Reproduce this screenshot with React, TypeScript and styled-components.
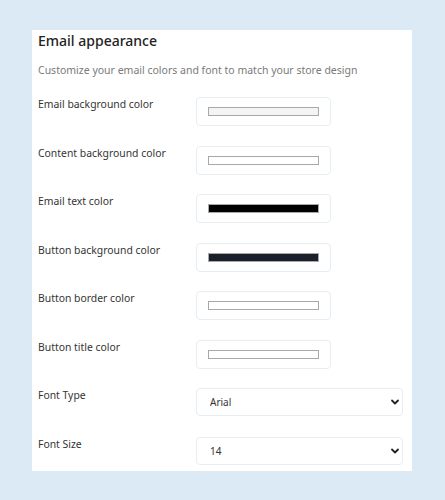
import React, { useState } from 'react'
import styled, { createGlobalStyle } from 'styled-components'

const GlobalStyle = createGlobalStyle`
  html, body {
    margin: 0;
    padding: 0;
    background: #dbeaf4;
  }
  body {
    font-family: "Noto Sans", "Open Sans", sans-serif;
  }
`

const colorFields = [
  { label: 'Email background color', value: '#f4f4f4' },
  { label: 'Content background color', value: '#ffffff' },
  { label: 'Email text color', value: '#000000' },
  { label: 'Button background color', value: '#1a1f2b' },
  { label: 'Button border color', value: '#ffffff' },
  { label: 'Button title color', value: '#ffffff' },
]

const Chevron = () => (
  <svg width="10" height="10" viewBox="0 0 10 10">
    <path d="M2 3.5 L5 6.5 L8 3.5" fill="none" stroke="#222" strokeWidth="1.8" strokeLinecap="round" strokeLinejoin="round" />
  </svg>
)

const App: React.FC = () => {
  const [colors, setColors] = useState(colorFields.map((f) => f.value))
  const [font, setFont] = useState('Arial')
  const [size, setSize] = useState('14')

  return (
    <>
      <GlobalStyle />
      <Page>
        <Card>
          <Title>Email appearance</Title>
          <Subtitle>Customize your email colors and font to match your store design</Subtitle>
          <Fields>
            {colorFields.map((f, i) => (
              <Row key={f.label}>
                <Label>{f.label}</Label>
                <ColorBox>
                  <ColorInput
                    type="color"
                    value={colors[i]}
                    onChange={(e) => {
                      const next = [...colors]
                      next[i] = e.target.value
                      setColors(next)
                    }}
                  />
                </ColorBox>
              </Row>
            ))}
            <Row>
              <Label>Font Type</Label>
              <SelectWrap>
                <Select value={font} onChange={(e) => setFont(e.target.value)} $indent={13}>
                  <option>Arial</option>
                  <option>Helvetica</option>
                  <option>Georgia</option>
                  <option>Verdana</option>
                </Select>
                <ChevronSpot>
                  <Chevron />
                </ChevronSpot>
              </SelectWrap>
            </Row>
            <Row>
              <Label>Font Size</Label>
              <SelectWrap>
                <Select value={size} onChange={(e) => setSize(e.target.value)} $indent={13}>
                  <option>12</option>
                  <option>13</option>
                  <option>14</option>
                  <option>16</option>
                </Select>
                <ChevronSpot>
                  <Chevron />
                </ChevronSpot>
              </SelectWrap>
            </Row>
          </Fields>
        </Card>
      </Page>
    </>
  )
}

export default App

const Page = styled.div`
  width: 445px;
  height: 500px;
  box-sizing: border-box;
  padding: 30px 33px 0 32px;
`

const Card = styled.div`
  background: #ffffff;
  height: 441px;
  box-sizing: border-box;
  padding: 1px 8px 0 6px;
`

const Title = styled.h2`
  margin: 0;
  font-size: 14px;
  font-weight: 500;
  color: #222;
  line-height: 20px;
`

const Subtitle = styled.p`
  margin: 11px 0 0;
  font-size: 10.5px;
  color: #7a7a7a;
  line-height: 16px;
`

const Fields = styled.div`
  display: flex;
  flex-direction: column;
  gap: 19.5px;
  margin-top: 19px;
`

const Row = styled.div`
  display: grid;
  grid-template-columns: 158px 1fr;
  align-items: start;
  height: 29px;
`

const Label = styled.div`
  font-size: 10.4px;
  color: #333;
  line-height: 14px;
`

const ColorBox = styled.div`
  width: 135px;
  height: 29px;
  box-sizing: border-box;
  border: 1px solid #e6eef3;
  border-radius: 4px;
  display: flex;
  align-items: center;
  padding: 0 11px;
`

const ColorInput = styled.input`
  appearance: none;
  -webkit-appearance: none;
  border: none;
  padding: 0;
  margin: 0;
  width: 111px;
  height: 9px;
  background: none;
  cursor: pointer;
  &::-webkit-color-swatch-wrapper {
    padding: 0;
  }
  &::-webkit-color-swatch {
    border: 1px solid #a8a8a8;
    border-radius: 0;
  }
`

const SelectWrap = styled.div`
  position: relative;
  width: 207px;
  height: 28px;
`

const Select = styled.select<{ $indent: number }>`
  appearance: none;
  -webkit-appearance: none;
  width: 100%;
  height: 100%;
  box-sizing: border-box;
  border: 1px solid #e6eef3;
  border-radius: 4px;
  background: #fff;
  font-family: "Noto Sans", sans-serif;
  font-size: 10px;
  color: #333;
  padding: 0 0 0 ${(p) => p.$indent}px;
  outline: none;
`

const ChevronSpot = styled.span`
  position: absolute;
  right: 3px;
  top: 9px;
  pointer-events: none;
  display: flex;
`
